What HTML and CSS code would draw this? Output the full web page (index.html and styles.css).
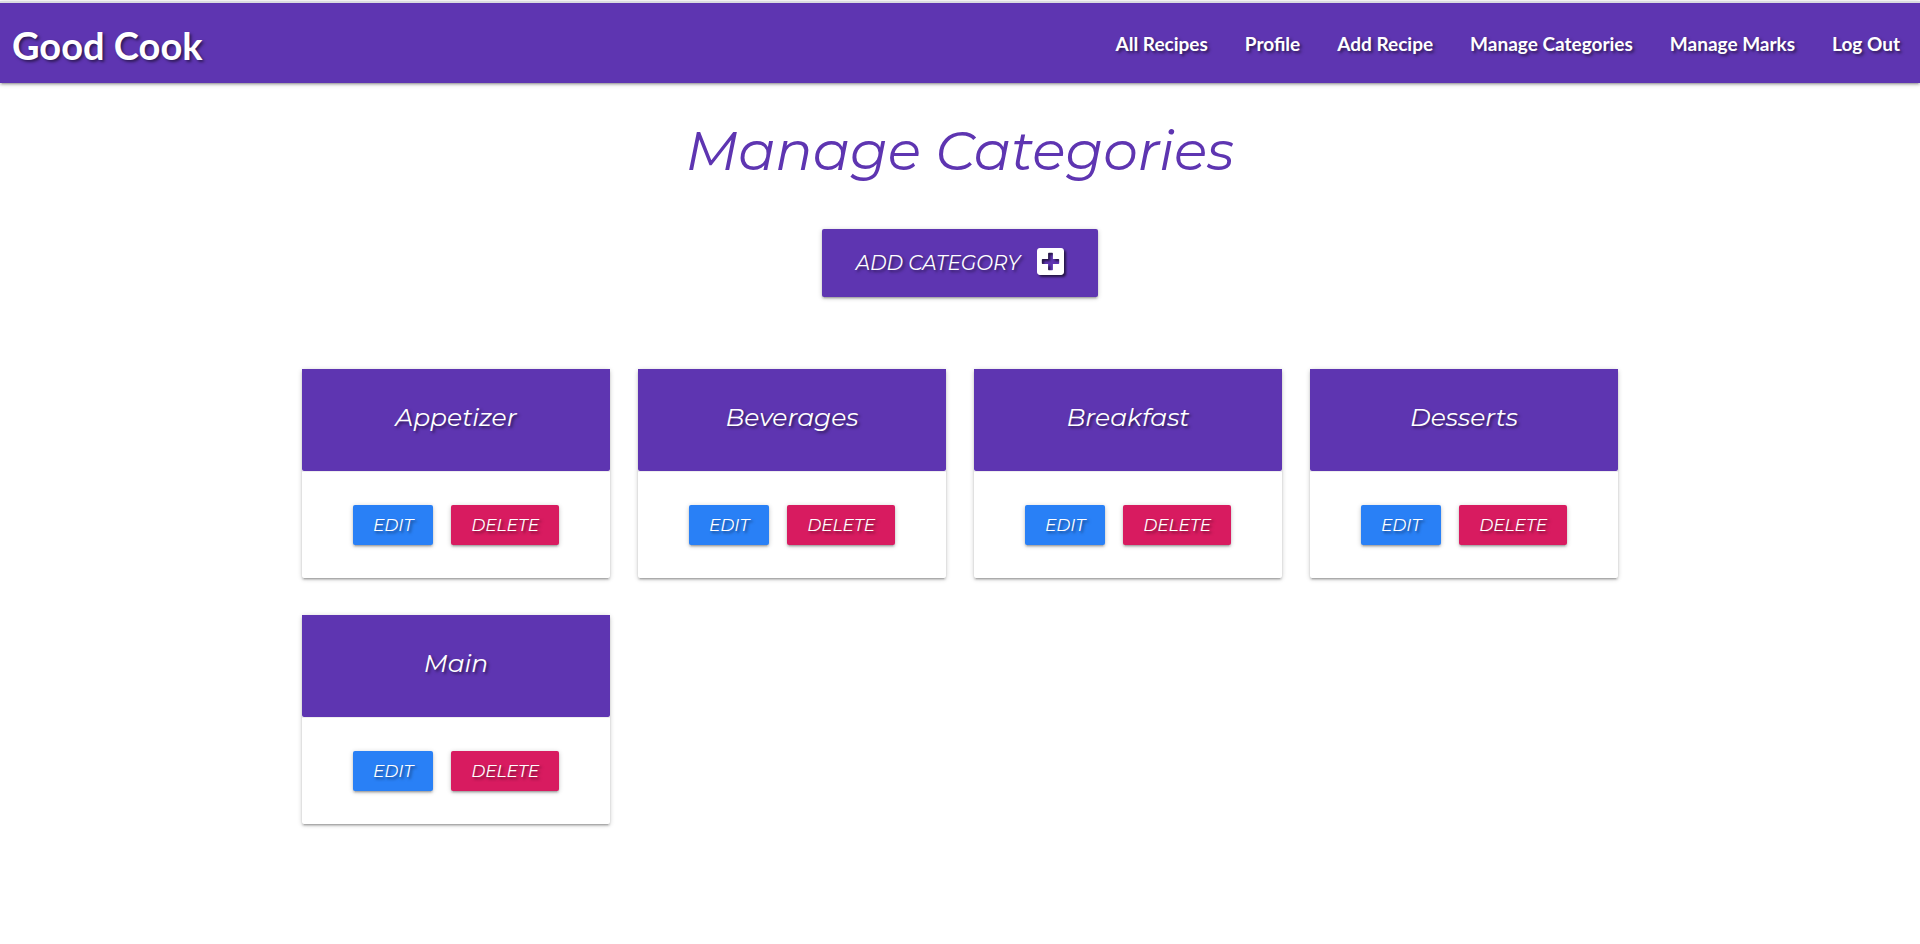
FILE: index.html
```html
<!DOCTYPE html>
<html lang="en">
<head>
<meta charset="utf-8">
<title>Good Cook - Manage Categories</title>
<link rel="stylesheet" href="styles.css">
</head>
<body>
<header class="navbar">
  <a class="brand" href="#">Good Cook</a>
  <nav class="nav-links">
    <a href="#">All Recipes</a>
    <a href="#">Profile</a>
    <a href="#">Add Recipe</a>
    <a href="#">Manage Categories</a>
    <a href="#">Manage Marks</a>
    <a href="#">Log Out</a>
  </nav>
</header>
<main>
  <h1 class="page-title">Manage Categories</h1>
  <div class="add-row">
    <a class="btn btn-large" href="#">Add Category
      <svg class="plus-icon" viewBox="0 0 448 512" aria-hidden="true"><path fill="currentColor" d="M400 32H48C21.500 32 0 53.500 0 80v352c0 26.500 21.500 48 48 48h352c26.500 0 48-21.500 48-48V80c0-26.500-21.500-48-48-48zm-32 252c0 6.600-5.400 12-12 12h-92v92c0 6.600-5.400 12-12 12h-56c-6.600 0-12-5.400-12-12v-92H92c-6.600 0-12-5.400-12-12v-56c0-6.600 5.400-12 12-12h92v-92c0-6.600 5.400-12 12-12h56c6.600 0 12 5.400 12 12v92h92c6.600 0 12 5.400 12 12v56z"/></svg>
    </a>
  </div>
  <div class="card-grid">
    <article class="card">
      <h2 class="card-title">Appetizer</h2>
      <div class="card-actions"><a class="btn btn-edit" href="#">Edit</a><a class="btn btn-delete" href="#">Delete</a></div>
    </article>
    <article class="card">
      <h2 class="card-title">Beverages</h2>
      <div class="card-actions"><a class="btn btn-edit" href="#">Edit</a><a class="btn btn-delete" href="#">Delete</a></div>
    </article>
    <article class="card">
      <h2 class="card-title">Breakfast</h2>
      <div class="card-actions"><a class="btn btn-edit" href="#">Edit</a><a class="btn btn-delete" href="#">Delete</a></div>
    </article>
    <article class="card">
      <h2 class="card-title">Desserts</h2>
      <div class="card-actions"><a class="btn btn-edit" href="#">Edit</a><a class="btn btn-delete" href="#">Delete</a></div>
    </article>
    <article class="card">
      <h2 class="card-title">Main</h2>
      <div class="card-actions"><a class="btn btn-edit" href="#">Edit</a><a class="btn btn-delete" href="#">Delete</a></div>
    </article>
  </div>
</main>
</body>
</html>
```
FILE: styles.css
```css
:root {
  --purple: #5e35b1;
  --raised: 0 2px 2px 0 rgba(0, 0, 0, .14), 0 3px 1px -2px rgba(0, 0, 0, .12), 0 1px 5px 0 rgba(0, 0, 0, .2);
  --text-shadow: 2px 2px 3px rgba(0, 0, 0, .5);
}

* {
  box-sizing: border-box;
}

body {
  margin: 0;
  padding: 1px 0 40px;
  background: #fff;
  font-family: Montserrat, Inter, sans-serif;
  font-style: italic;
}

a {
  color: inherit;
  text-decoration: none;
}

.navbar {
  display: flex;
  justify-content: space-between;
  align-items: center;
  height: 82px;
  padding: 0 20px 0 12px;
  border-top: 2px solid #dadce0;
  background: var(--purple);
  box-shadow: var(--raised);
  color: #fff;
  font-family: Lato, sans-serif;
  font-style: normal;
  font-weight: 700;
  text-shadow: var(--text-shadow);
}

.brand {
  padding-top: 4px;
  font-size: 38px;
}

.nav-links {
  display: flex;
  gap: 37px;
  font-size: 19px;
}

.page-title {
  margin: 33px 0 44px;
  color: var(--purple);
  font-size: 55px;
  font-weight: 400;
  line-height: 69px;
  text-align: center;
}

.add-row {
  display: flex;
  justify-content: center;
  margin-bottom: 72px;
}

.btn {
  display: inline-flex;
  align-items: center;
  height: 40px;
  padding: 0 20px;
  border-radius: 2px;
  background: var(--purple);
  box-shadow: var(--raised);
  color: #fff;
  font-size: 17px;
  font-weight: 400;
  text-shadow: var(--text-shadow);
  text-transform: uppercase;
}

.btn-large {
  gap: 17px;
  height: 68px;
  padding: 0 34px;
  font-size: 20px;
}

.btn-edit {
  background: #2980f6;
}

.btn-delete {
  background: #d81b60;
}

.plus-icon {
  width: 27px;
  height: 31px;
  margin-bottom: 4px;
  filter: drop-shadow(2px 2px 1px rgba(0, 0, 0, .6));
}

.card-grid {
  display: grid;
  grid-template-columns: repeat(4, 1fr);
  gap: 37px 28px;
  width: 70%;
  margin: 0 auto;
  padding: 0 14px;
}

.card {
  border-radius: 2px;
  background: #fff;
  box-shadow: var(--raised);
}

.card-title {
  margin: 0;
  padding: 32px 20px 38px;
  border-radius: 0 0 2px 2px;
  background: var(--purple);
  color: #fff;
  font-size: 25px;
  font-weight: 400;
  line-height: 32px;
  text-align: center;
  text-shadow: var(--text-shadow);
}

.card-actions {
  display: flex;
  justify-content: center;
  gap: 18px;
  padding: 33px 20px;
  border-top: 1px solid #eee;
}
```
